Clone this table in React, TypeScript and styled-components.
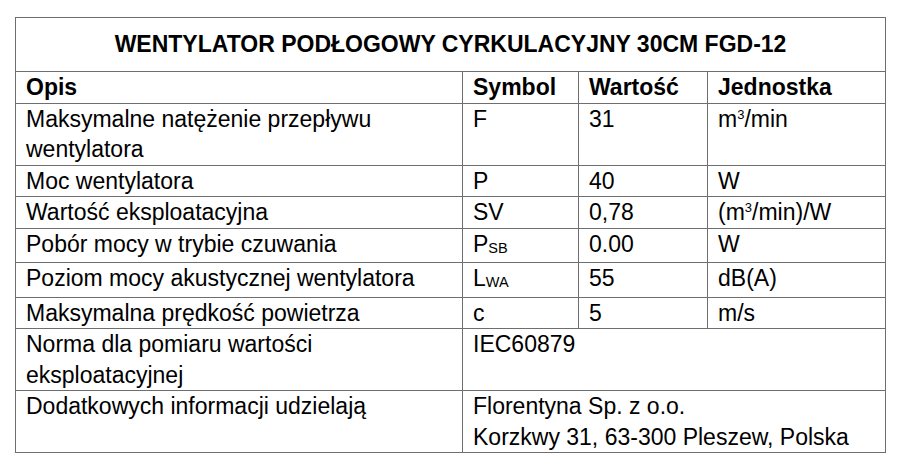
import { FC, ReactNode } from "react";
import styled, { createGlobalStyle } from "styled-components";

const GlobalStyle = createGlobalStyle`
  html, body {
    margin: 0;
    padding: 0;
    background: #ffffff;
  }

  body {
    font-family: "Liberation Sans", Arial, sans-serif;
    color: #000000;
  }
`;

const Page = styled.main`
  padding: 17px 15px 0 15px;
`;

const Table = styled.table`
  width: 870px;
  table-layout: fixed;
  border-collapse: collapse;
  font-size: 23px;
  line-height: 30.5px;
`;

const TitleCell = styled.th`
  height: 53px;
  padding: 0;
  border: 1px solid #6e6e6e;
  text-align: center;
  vertical-align: middle;
  font-size: 23px;
  font-weight: bold;
`;

const HeadCell = styled.th`
  padding: 0 10px;
  border: 1px solid #6e6e6e;
  text-align: left;
  vertical-align: top;
  font-weight: bold;
`;

const Cell = styled.td`
  padding: 0 10px;
  border: 1px solid #6e6e6e;
  text-align: left;
  vertical-align: top;
  font-weight: normal;
  white-space: nowrap;
`;

const Sub = styled.span`
  font-size: 14.5px;
  position: relative;
  top: 1px;
`;

const Sup = styled.sup`
  font-size: 13px;
  line-height: 0;
  vertical-align: 8px;
`;

interface IRow {
  label: ReactNode;
  symbol: ReactNode;
  value: string;
  unit: ReactNode;
}

const rows: IRow[] = [
  {
    label: (
      <>
        Maksymalne natężenie przepływu
        <br />
        wentylatora
      </>
    ),
    symbol: "F",
    value: "31",
    unit: (
      <>
        m<Sup>3</Sup>/min
      </>
    ),
  },
  { label: "Moc wentylatora", symbol: "P", value: "40", unit: "W" },
  {
    label: "Wartość eksploatacyjna",
    symbol: "SV",
    value: "0,78",
    unit: (
      <>
        (m<Sup>3</Sup>/min)/W
      </>
    ),
  },
  {
    label: "Pobór mocy w trybie czuwania",
    symbol: (
      <>
        P<Sub>SB</Sub>
      </>
    ),
    value: "0.00",
    unit: "W",
  },
  {
    label: "Poziom mocy akustycznej wentylatora",
    symbol: (
      <>
        L<Sub>WA</Sub>
      </>
    ),
    value: "55",
    unit: "dB(A)",
  },
  { label: "Maksymalna prędkość powietrza", symbol: "c", value: "5", unit: "m/s" },
];

const SpecTable: FC = () => (
  <Table>
    <colgroup>
      <col style={{ width: 447 }} />
      <col style={{ width: 116 }} />
      <col style={{ width: 129 }} />
      <col style={{ width: 178 }} />
    </colgroup>
    <thead>
      <tr>
        <TitleCell colSpan={4}>WENTYLATOR PODŁOGOWY CYRKULACYJNY 30CM FGD-12</TitleCell>
      </tr>
      <tr>
        <HeadCell>Opis</HeadCell>
        <HeadCell>Symbol</HeadCell>
        <HeadCell>Wartość</HeadCell>
        <HeadCell>Jednostka</HeadCell>
      </tr>
    </thead>
    <tbody>
      {rows.map((row, i) => (
        <tr key={i}>
          <Cell>{row.label}</Cell>
          <Cell>{row.symbol}</Cell>
          <Cell>{row.value}</Cell>
          <Cell>{row.unit}</Cell>
        </tr>
      ))}
      <tr>
        <Cell>
          Norma dla pomiaru wartości
          <br />
          eksploatacyjnej
        </Cell>
        <Cell colSpan={3}>
          IEC60879
          <br />
          &nbsp;
        </Cell>
      </tr>
      <tr>
        <Cell>Dodatkowych informacji udzielają</Cell>
        <Cell colSpan={3}>
          Florentyna Sp. z o.o.
          <br />
          Korzkwy 31, 63-300 Pleszew, Polska
        </Cell>
      </tr>
    </tbody>
  </Table>
);

export default function App() {
  return (
    <>
      <GlobalStyle />
      <Page>
        <SpecTable />
      </Page>
    </>
  );
}
